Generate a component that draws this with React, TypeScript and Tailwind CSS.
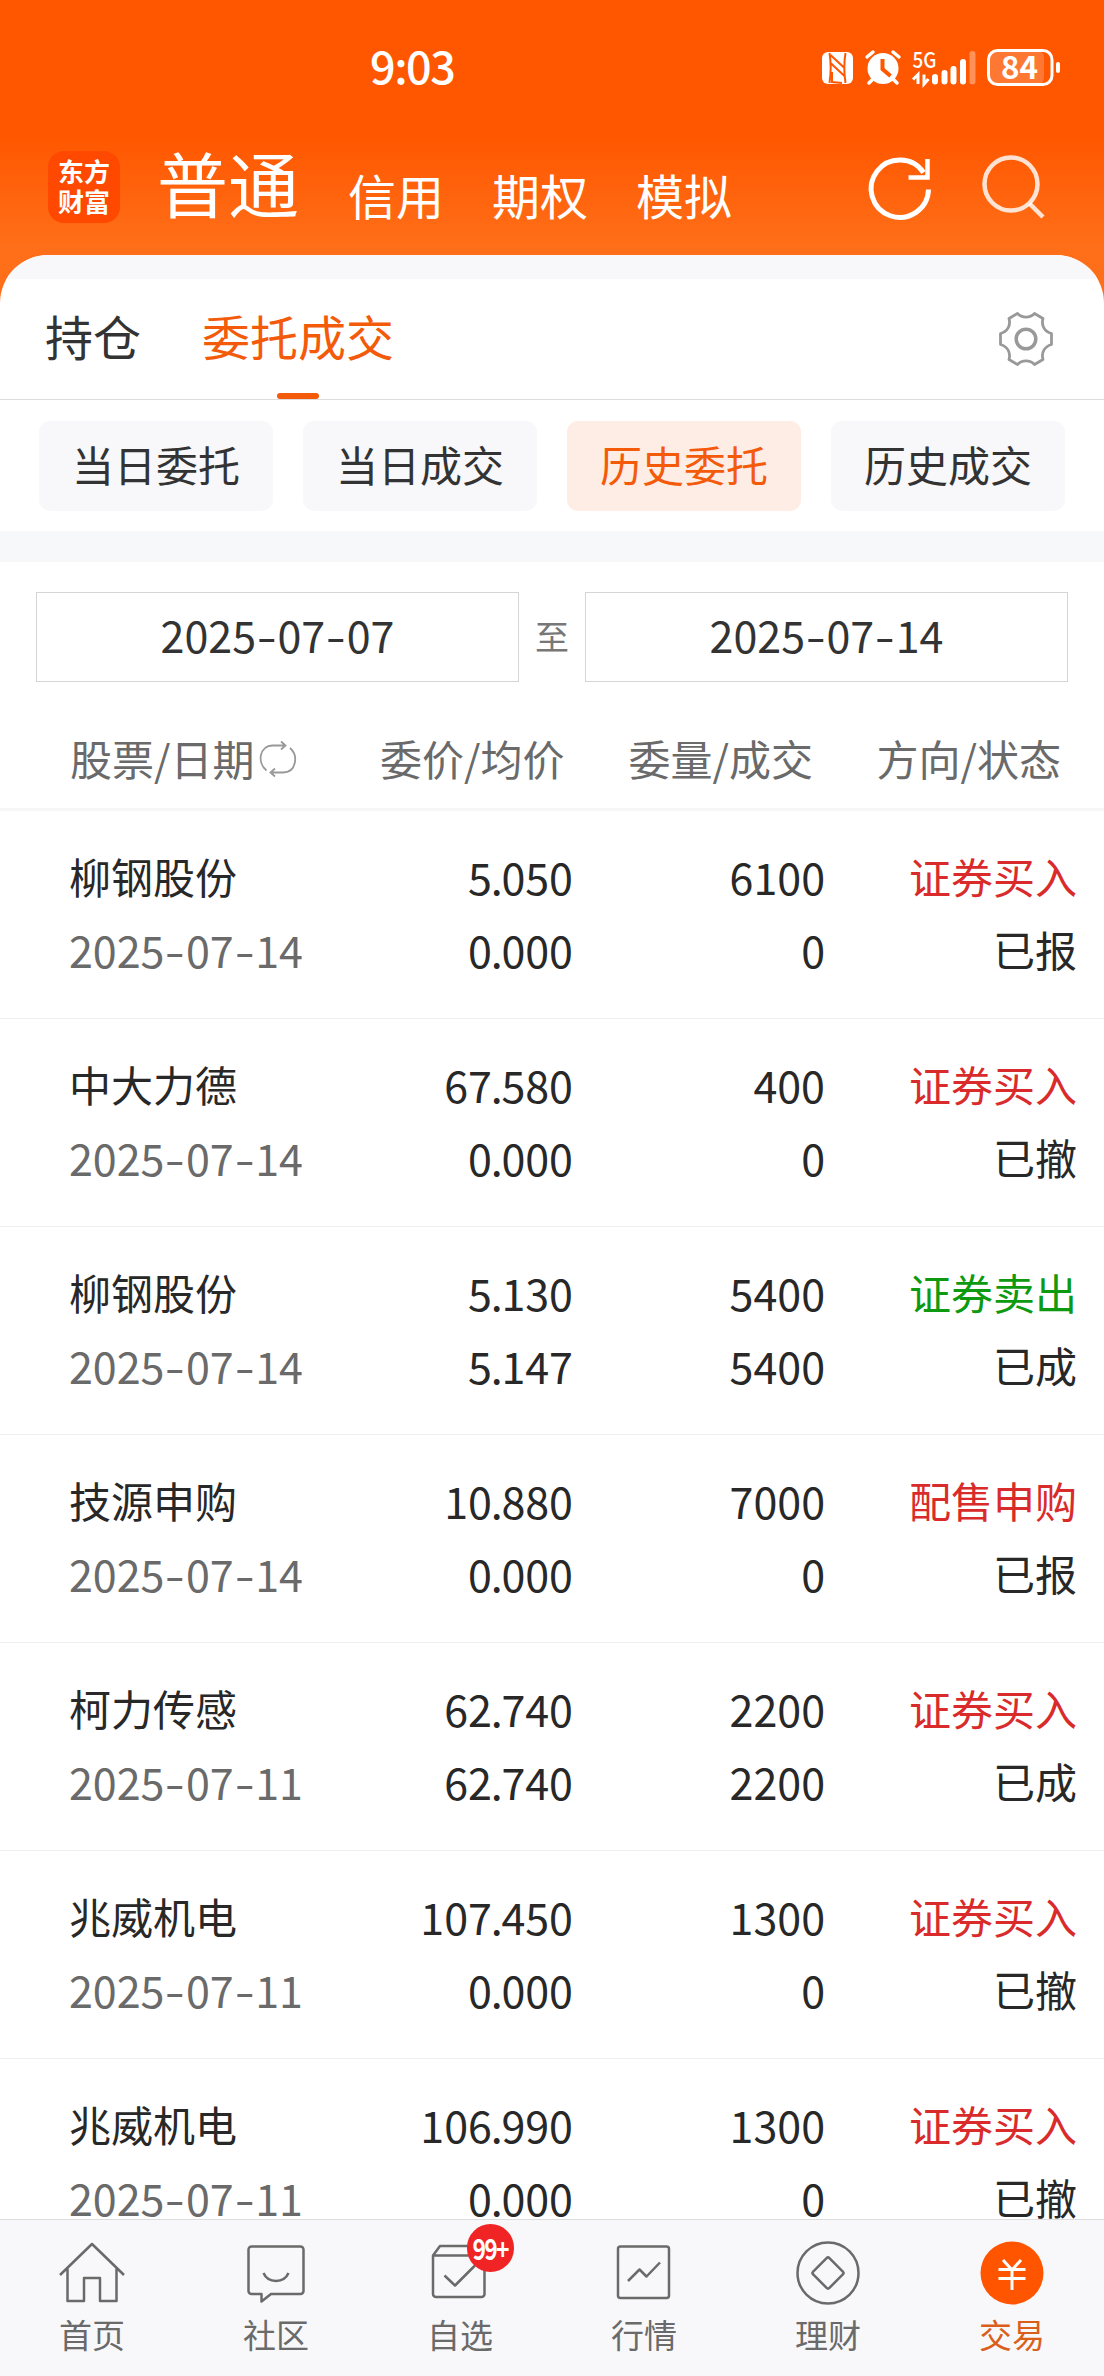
import { ReactNode } from 'react'

type Order = {
  name: string
  date: string
  price: string
  avg: string
  qty: string
  filled: string
  side: string
  status: string
}

const orders: Order[] = [
  { name: '柳钢股份', date: '2025-07-14', price: '5.050', avg: '0.000', qty: '6100', filled: '0', side: '证券买入', status: '已报' },
  { name: '中大力德', date: '2025-07-14', price: '67.580', avg: '0.000', qty: '400', filled: '0', side: '证券买入', status: '已撤' },
  { name: '柳钢股份', date: '2025-07-14', price: '5.130', avg: '5.147', qty: '5400', filled: '5400', side: '证券卖出', status: '已成' },
  { name: '技源申购', date: '2025-07-14', price: '10.880', avg: '0.000', qty: '7000', filled: '0', side: '配售申购', status: '已报' },
  { name: '柯力传感', date: '2025-07-11', price: '62.740', avg: '62.740', qty: '2200', filled: '2200', side: '证券买入', status: '已成' },
  { name: '兆威机电', date: '2025-07-11', price: '107.450', avg: '0.000', qty: '1300', filled: '0', side: '证券买入', status: '已撤' },
  { name: '兆威机电', date: '2025-07-11', price: '106.990', avg: '0.000', qty: '1300', filled: '0', side: '证券买入', status: '已撤' },
]

const filters = ['当日委托', '当日成交', '历史委托', '历史成交']

// Digits with a wide dash and a tight decimal point
function Num({ children }: { children: string }) {
  return (
    <span className="text-[43px] whitespace-nowrap">
      {children.split(/([-.])/).map((part, i) => {
        if (part === '-') {
          return (
            <span key={i} className="inline-block w-[21.5px] text-center scale-x-[1.35]">
              -
            </span>
          )
        }
        if (part === '.') {
          return (
            <span key={i} className="-mx-[1.25px]">
              .
            </span>
          )
        }
        return part
      })}
    </span>
  )
}

function StatusBar() {
  return (
    <div className="flex h-[136px] shrink-0 items-start pl-[370px] text-white">
      <span className="mt-[32px] w-[452px] text-[45px] leading-[66px] font-medium tracking-[-1.5px]">9:03</span>
      <svg className="mt-[36px] h-[60px] w-[240px]" viewBox="822 36 240 60" fill="none">
        {/* NFC */}
        <rect x="822" y="52" width="31" height="32" rx="6" fill="#fff" />
        <path d="M829.500 53c1.500 9 1.500 20 0 30M845.500 53c-1.500 9-1.500 20 0 30M830.500 55l14 13M830.500 63l14 13M832 72v10l10 1" stroke="#ff5700" strokeWidth="2" />
        {/* alarm */}
        <circle cx="883" cy="68.500" r="15.500" fill="#fff" />
        <path d="M867 57l6-5M899 57l-6-5M873 79l-4 4M893 79l4 4" stroke="#fff" strokeWidth="3.500" strokeLinecap="round" />
        <path d="M882.500 59v10l8 7" stroke="#ff5700" strokeWidth="4" />
        {/* signal */}
        <text x="912.500" y="67.500" fontSize="22" fontWeight="500" fill="#fff" textLength="24" lengthAdjust="spacingAndGlyphs">5G</text>
        <path d="M913 79.500l5-5V84M924 74.500V84l4.500-5" stroke="#fff" strokeWidth="3" />
        <path d="M935 77v4.500M944.500 73v8.500M953.500 69v12.500M963 62v19.500" stroke="#fff" strokeWidth="6" strokeLinecap="round" />
        <path d="M972.500 54v27.500" stroke="#fff" strokeOpacity=".35" strokeWidth="6" strokeLinecap="round" />
        {/* battery */}
        <rect x="989" y="51" width="55" height="33" rx="6" fill="#fff" fillOpacity=".2" />
        <rect x="988.500" y="50.500" width="63.500" height="34" rx="9" stroke="#fff" strokeWidth="3" />
        <rect x="1056" y="62" width="4" height="11" rx="2" fill="#fff" />
        <text x="1001" y="79" fontSize="32" fontWeight="700" fill="#fff" textLength="37" lengthAdjust="spacingAndGlyphs">84</text>
      </svg>
    </div>
  )
}

function Header() {
  return (
    <div className="flex h-[119px] shrink-0 items-start pl-[48px] text-white">
      <div className="mt-[15px] flex h-[72px] w-[72px] flex-col items-center justify-center rounded-[16px] bg-[#ff4800] pb-[2px] text-[26px] leading-[30px] font-bold">
        <span>东方</span>
        <span>财富</span>
      </div>
      <span className="mt-[5px] ml-[37px] text-[71px] leading-[80px]">普通</span>
      <div className="mt-[28px] ml-[49px] flex gap-[48px] text-[48px] leading-[60px]">
        <span>信用</span>
        <span>期权</span>
        <span>模拟</span>
      </div>
      <svg className="mt-[16px] ml-[132px] h-[72px] w-[190px]" viewBox="864 152 190 72" fill="none" stroke="#fff" strokeWidth="5">
        <path d="M928.500 189.500A28.700 28.700 0 1 1 923.500 172.500" />
        <path d="M927.500 159v18.500h-19" strokeWidth="4.500" />
        <g strokeOpacity=".82" strokeWidth="4.500">
          <circle cx="1011" cy="184" r="26.500" />
          <path d="M1029.500 203.500l13.500 13.500" />
        </g>
      </svg>
    </div>
  )
}

function GearIcon() {
  return (
    <svg className="h-[56px] w-[56px]" viewBox="-28 -28 56 56" fill="none" stroke="#999" strokeWidth="2.800" strokeLinejoin="round">
      <circle r="9.800" strokeWidth="3.500" />
      <path d="M-8.500-25.500C-4-20.700 4-20.700 8.500-25.500L17-20.500C15-13.500 18.500-7.500 25.500-5.500V5.500C18.500 7.500 15 13.500 17 20.500L8.500 25.500C4 20.700-4 20.700-8.500 25.500L-17 20.500C-15 13.500-18.500 7.500-25.500 5.500V-5.500C-18.500-7.500-15-13.500-17-20.500Z" />
    </svg>
  )
}

function SyncIcon() {
  return (
    <svg className="ml-[4px] h-[40px] w-[40px]" viewBox="258 740 40 40" fill="none" stroke="#999" strokeWidth="1.800">
      <path d="M266.500 771.500C257 764 259 746.500 273 746.500h12M281 742.500l4.500 4-4.500 4" />
      <path d="M290 749c8.500 7.500 6.500 24.500-7 24.500h-12M275 769.500l-4.500 4 4.500 4" />
    </svg>
  )
}

function OrderRow({ order }: { order: Order }) {
  const isSell = order.side === '证券卖出'
  return (
    <div className="grid h-[208px] shrink-0 grid-cols-[240px_264px_252px_252px] content-start border-b border-[#eeeeee] pt-[29px] pl-[69px] text-[42px] leading-[72px] text-[#282828]">
      <span>{order.name}</span>
      <span className="text-right"><Num>{order.price}</Num></span>
      <span className="text-right"><Num>{order.qty}</Num></span>
      <span className={`text-right ${isSell ? 'text-[#0d9a10]' : 'text-[#d92b2b]'}`}>{order.side}</span>
      <span className="text-[#6a6a6a]"><Num>{order.date}</Num></span>
      <span className="text-right"><Num>{order.avg}</Num></span>
      <span className="text-right"><Num>{order.filled}</Num></span>
      <span className="text-right">{order.status}</span>
    </div>
  )
}

// Every tab icon is drawn in a 72x72 box centred over its label
function TabIcon({ children }: { children: ReactNode }) {
  return (
    <svg className="h-[72px] w-[72px]" viewBox="-36 -36 72 72" fill="none" stroke="#6a6a6a" strokeWidth="2.500" strokeLinejoin="round">
      {children}
    </svg>
  )
}

const tabs: { label: string; icon: ReactNode; badge?: string; active?: boolean }[] = [
  {
    label: '首页',
    icon: <path d="M-32 2L0-29 32 2M-24.500-5V28H-8V5H8V28H24.500V-5" />,
  },
  {
    label: '社区',
    icon: (
      <>
        <path d="M-24.500-26.500h49a3 3 0 0 1 3 3V18a3 3 0 0 1-3 3H-5L-14.500 28.500V21h-10a3 3 0 0 1-3-3V-23.500a3 3 0 0 1 3-3Z" />
        <path d="M-12.500 0C-8 10.500 8 10.500 12.500 0" />
      </>
    ),
  },
  {
    label: '自选',
    badge: '99+',
    icon: (
      <>
        <path d="M-27-17.500V21a3 3 0 0 0 3 3H21.500a3 3 0 0 0 3-3V-17.500ZM-27-17.500L-20-27H20L24.500-17.500" />
        <path d="M-15.500 2.500L-5 12.500 15-7.500" />
      </>
    ),
  },
  {
    label: '行情',
    icon: (
      <>
        <rect x="-26" y="-26.500" width="51" height="51.500" rx="2.500" />
        <path d="M-16 8L-4.500-3.500 2.500 3.500 16-10.500" />
      </>
    ),
  },
  {
    label: '理财',
    icon: (
      <>
        <circle r="30.500" />
        <rect x="-11.500" y="-11.500" width="23" height="23" rx="2" transform="rotate(45)" />
      </>
    ),
  },
  {
    label: '交易',
    active: true,
    icon: (
      <>
        <circle r="31.500" fill="#ff5500" stroke="none" />
        <path d="M-9-13L0-3 9-13M0-3V17M-13.500-3.500H13.500M-13.500 5.500H13.500" stroke="#fff" strokeWidth="3" />
      </>
    ),
  },
]

export default function App() {
  return (
    <div className="flex h-[2376px] w-[1104px] flex-col overflow-hidden bg-[linear-gradient(180deg,#ff5700_0px,#ff5700_135px,#ff6e18_245px,#ff6e18_100%)] font-['Noto_Sans_CJK_SC',sans-serif]">
      <StatusBar />
      <Header />

      <div className="flex min-h-0 flex-1 flex-col overflow-hidden rounded-t-[48px] bg-white">
        <div className="h-[24px] shrink-0 bg-[#f8f8fa]" />

        {/* Tabs */}
        <div className="flex h-[121px] shrink-0 items-start border-b border-[#dddddd] pr-[50px] pl-[45px] text-[48px] leading-[72px]">
          <span className="mt-[20px] text-[#333333]">持仓</span>
          <div className="ml-[61px] flex flex-col items-center text-[#f35b0b]">
            <span className="mt-[20px]">委托成交</span>
            <span className="mt-[22px] h-[6px] w-[42px] rounded-full bg-[#f35b0b]" />
          </div>
          <div className="mt-[32px] ml-auto">
            <GearIcon />
          </div>
        </div>

        {/* Filters */}
        <div className="flex shrink-0 gap-[30px] px-[39px] pt-[21px] pb-[20px]">
          {filters.map((f) => (
            <button
              key={f}
              className={`h-[90px] flex-1 rounded-[11px] pb-[4px] text-[42px] leading-[86px] ${
                f === '历史委托' ? 'bg-[#feede5] text-[#f35b0b]' : 'bg-[#f8f8fa] text-[#333333]'
              }`}
            >
              {f}
            </button>
          ))}
        </div>

        <div className="h-[31px] shrink-0 bg-[#f7f8fa]" />

        {/* Date range */}
        <div className="flex shrink-0 items-center px-[36px] pt-[30px] text-[#333333]">
          <div className="h-[90px] flex-1 border border-[#d5d5d5] text-center leading-[83px]">
            <Num>2025-07-07</Num>
          </div>
          <span className="w-[66px] pb-[3px] text-center text-[34px] text-[#777777]">至</span>
          <div className="h-[90px] flex-1 border border-[#d5d5d5] text-center leading-[83px]">
            <Num>2025-07-14</Num>
          </div>
        </div>

        {/* Column titles */}
        <div className="grid h-[129px] shrink-0 grid-cols-[310px_248.5px_248px_1fr] items-center border-b-[3px] border-[#f7f7f7] pt-[24px] pl-[70px] text-[42px] text-[#6a6a6a]">
          <span className="flex items-center">
            股票/日期
            <span className="pt-[3px]">
              <SyncIcon />
            </span>
          </span>
          <span>委价/均价</span>
          <span>委量/成交</span>
          <span>方向/状态</span>
        </div>

        <div className="min-h-0 flex-1 overflow-hidden">
          {orders.map((order, i) => (
            <OrderRow key={i} order={order} />
          ))}
        </div>
      </div>

      <nav className="grid h-[157px] shrink-0 grid-cols-6 border-t border-[#dddddd] bg-[#f8f8fa]">
        {tabs.map((tab) => (
          <div key={tab.label} className="relative flex flex-col items-center pt-[17px]">
            <TabIcon>{tab.icon}</TabIcon>
            <span className={`mt-[1px] text-[33px] leading-[48px] ${tab.active ? 'text-[#d95f1a]' : 'text-[#6a6a6a]'}`}>
              {tab.label}
            </span>
            {tab.badge && (
              <span className="absolute top-[4px] left-[99px] flex h-[48px] w-[47px] items-center justify-center rounded-full bg-[#f02424] pb-[2px] text-[26px] font-bold tracking-[-2px] text-white">
                <span className="scale-x-[0.88] scale-y-110">{tab.badge}</span>
              </span>
            )}
          </div>
        ))}
      </nav>
    </div>
  )
}
